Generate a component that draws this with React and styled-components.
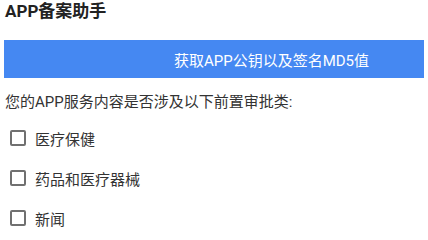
import React from "react";
import styled, {createGlobalStyle} from "styled-components";

const GlobalStyle = createGlobalStyle`
    body {
        margin: 0;
        background: #fff;
        font-family: Roboto, "Noto Sans CJK SC", sans-serif;
    }
`

const Page = styled.div`
    display: flex;
    flex-direction: column;
    width: 428px;
`

const Title = styled.h1`
    margin: 0;
    padding: 0 5px;
    height: 30px;
    font-size: 17px;
    line-height: 22px;
    font-weight: bold;
    color: #222;
`

const ActionButton = styled.button`
    display: flex;
    align-items: center;
    justify-content: center;
    margin: 10px 4px 0;
    height: 38px;
    padding: 0 0 0 115px;
    border: none;
    background: #4588f2;
    color: #fff;
    font-family: inherit;
    font-size: 15px;
`

const Question = styled.p`
    margin: 14px 0 6px;
    padding: 0 5px;
    font-size: 15px;
    line-height: 20px;
    color: #333;
`

const Option = styled.label`
    display: flex;
    align-items: center;
    gap: 9px;
    height: 40px;
    padding-left: 10px;
    font-size: 15px;
    color: #333;
`

const Box = styled.span`
    box-sizing: border-box;
    width: 16px;
    height: 16px;
    border: 2px solid #707070;
    border-radius: 2px;
`

const options = ["医疗保健", "药品和医疗器械", "新闻"];

export default function App() {
    return (
        <Page>
            <GlobalStyle/>
            <Title>APP备案助手</Title>
            <ActionButton>获取APP公钥以及签名MD5值</ActionButton>
            <Question>您的APP服务内容是否涉及以下前置审批类:</Question>
            {options.map(text => (
                <Option key={text}>
                    <Box/>
                    {text}
                </Option>
            ))}
        </Page>
    );
}
